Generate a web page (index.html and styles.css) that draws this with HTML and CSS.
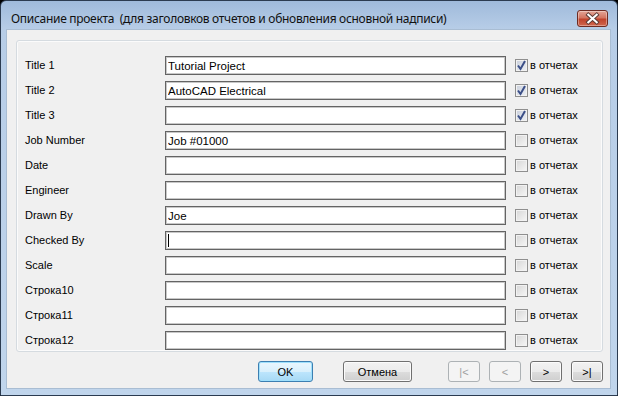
FILE: index.html
```html
<!DOCTYPE html>
<html lang="ru">
<head>
  <meta charset="UTF-8">
  <title>Описание проекта</title>
  <link rel="stylesheet" href="styles.css">
</head>
<body>

  <div class="window">
    <div class="titlebar">
      <span class="title">Описание проекта  (для заголовков отчетов и обновления основной надписи)</span>
      <button class="close" title="Закрыть">
        <svg width="31" height="17" viewBox="0 0 31 17">
          <path d="M11 4.5 L20 12.5 M20 4.5 L11 12.5" stroke="#5b3a35" stroke-width="4.2" stroke-linecap="square"/>
          <path d="M11 4.5 L20 12.5 M20 4.5 L11 12.5" stroke="#fff" stroke-width="2.2" stroke-linecap="square"/>
        </svg>
      </button>
    </div>

    <div class="client">
      <div class="panel">
        <div class="row">
          <span class="name">Title 1</span>
          <input class="field" type="text" value="Tutorial Project">
          <span class="report"><span class="box checked"><svg width="11" height="11" viewBox="0 0 11 11"><path d="M2 5.5 L4.5 9 L9 1" fill="none" stroke="#3b4f88" stroke-width="2"/></svg></span>в отчетах</span>
        </div>
        <div class="row">
          <span class="name">Title 2</span>
          <input class="field" type="text" value="AutoCAD Electrical">
          <span class="report"><span class="box checked"><svg width="11" height="11" viewBox="0 0 11 11"><path d="M2 5.5 L4.5 9 L9 1" fill="none" stroke="#3b4f88" stroke-width="2"/></svg></span>в отчетах</span>
        </div>
        <div class="row">
          <span class="name">Title 3</span>
          <input class="field" type="text" value="">
          <span class="report"><span class="box checked"><svg width="11" height="11" viewBox="0 0 11 11"><path d="M2 5.5 L4.5 9 L9 1" fill="none" stroke="#3b4f88" stroke-width="2"/></svg></span>в отчетах</span>
        </div>
        <div class="row">
          <span class="name">Job Number</span>
          <input class="field" type="text" value="Job #01000">
          <span class="report"><span class="box"></span>в отчетах</span>
        </div>
        <div class="row">
          <span class="name">Date</span>
          <input class="field" type="text" value="">
          <span class="report"><span class="box"></span>в отчетах</span>
        </div>
        <div class="row">
          <span class="name">Engineer</span>
          <input class="field" type="text" value="">
          <span class="report"><span class="box"></span>в отчетах</span>
        </div>
        <div class="row">
          <span class="name">Drawn By</span>
          <input class="field" type="text" value="Joe">
          <span class="report"><span class="box"></span>в отчетах</span>
        </div>
        <div class="row">
          <span class="name">Checked By</span>
          <span class="field-wrap focused"><input class="field" type="text" value=""></span>
          <span class="report"><span class="box"></span>в отчетах</span>
        </div>
        <div class="row">
          <span class="name">Scale</span>
          <input class="field" type="text" value="">
          <span class="report"><span class="box"></span>в отчетах</span>
        </div>
        <div class="row">
          <span class="name">Строка10</span>
          <input class="field" type="text" value="">
          <span class="report"><span class="box"></span>в отчетах</span>
        </div>
        <div class="row">
          <span class="name">Строка11</span>
          <input class="field" type="text" value="">
          <span class="report"><span class="box"></span>в отчетах</span>
        </div>
        <div class="row">
          <span class="name">Строка12</span>
          <input class="field" type="text" value="">
          <span class="report"><span class="box"></span>в отчетах</span>
        </div>
      </div>

      <div class="buttons">
        <button class="btn default ok">OK</button>
        <button class="btn cancel">Отмена</button>
        <div class="nav">
          <button class="btn small" disabled>|&lt;</button>
          <button class="btn small" disabled>&lt;</button>
          <button class="btn small">&gt;</button>
          <button class="btn small">&gt;|</button>
        </div>
      </div>
    </div>
  </div>

</body>
</html>
```

FILE: styles.css
```css
body {
  margin: 0;
  background: #000;
  font-family: 'Liberation Sans', Arial, sans-serif;
  font-size: 11px;
  color: #000;
}

.window {
  width: 618px;
  height: 396px;
  box-sizing: border-box;
  border: 1px solid #2b3b50;
  border-radius: 6px 6px 0 0;
  background: linear-gradient(#9fbadb 0, #b7cde7 28px, #c0d5ec 100%);
  display: flex;
  flex-direction: column;
}

.titlebar {
  height: 29px;
  box-sizing: border-box;
  padding: 6px 9px 0 10px;
  display: flex;
  align-items: center;
  justify-content: space-between;
}

.title {
  font-family: 'Noto Sans', 'Open Sans', sans-serif;
  font-size: 12px;
  color: #111;
  white-space: pre;
  letter-spacing: -0.3px;
}

.close {
  width: 31px;
  height: 17px;
  margin-top: -1px;
  padding: 0;
  border: 1px solid #6e2b22;
  border-radius: 3px;
  background: linear-gradient(#e3a597 0, #d47561 45%, #c0432c 55%, #d0664e 100%);
  box-shadow: inset 0 0 0 1px rgba(255, 255, 255, 0.35);
  display: flex;
  align-items: center;
  justify-content: center;
}

.close svg {
  display: block;
}

.client {
  flex: 1;
  margin: 0 7px 7px 6px;
  background: #f0f0f0;
  box-shadow: 0 0 0 1px #a9bdd3;
  display: flex;
  flex-direction: column;
}

.panel {
  margin: 10px 7px 0 9px;
  padding: 15px 0 1px 8px;
  border: 1px solid #d5dbe0;
  border-radius: 3px;
  box-shadow: inset 0 0 0 1px #fbfbfb;
  display: flex;
  flex-direction: column;
  gap: 6px;
}

.row {
  display: flex;
  align-items: center;
  height: 19px;
}

.name {
  width: 140px;
  margin-top: -2px;
}

.field {
  width: 341px;
  height: 19px;
  box-sizing: border-box;
  margin: 0;
  padding: 0 2px;
  border: 1px solid #646464;
  box-shadow: inset 0 0 0 1px #c8c8c8;
  border-radius: 0;
  background: #fff;
  font-family: 'Liberation Sans', Arial, sans-serif;
  font-size: 11.5px;
  color: #000;
  outline: none;
}

.field-wrap {
  position: relative;
  display: block;
  height: 19px;
}

.focused::after {
  content: "";
  position: absolute;
  left: 3px;
  top: 3px;
  width: 1px;
  height: 13px;
  background: #000;
}

.report {
  margin-left: 9px;
  display: flex;
  align-items: center;
  gap: 2px;
  margin-top: -1px;
}

.box {
  width: 13px;
  height: 13px;
  box-sizing: border-box;
  border: 1px solid #8f8f8f;
  background: linear-gradient(135deg, #d6d6d6, #f7f7f7);
  box-shadow: inset 0 0 0 1px #f2f2f2;
  display: flex;
  align-items: center;
  justify-content: center;
}

.box.checked {
  background: linear-gradient(135deg, #c9cfdb, #eef1f6);
}

.box svg {
  display: block;
}

.buttons {
  margin: 9px 7px 0 0;
  display: flex;
  justify-content: flex-end;
  align-items: center;
}

.btn {
  height: 21px;
  margin: 0;
  padding: 0;
  border: 1px solid #707070;
  border-radius: 3px;
  background: linear-gradient(#f2f2f2 0, #ebebeb 50%, #dddddd 50%, #cfcfcf 100%);
  box-shadow: inset 0 0 0 1px #fbfbfb;
  font-family: 'Liberation Sans', Arial, sans-serif;
  font-size: 11px;
  color: #000;
}

.btn.default {
  border-color: #3c7fb1;
  background: linear-gradient(#eaf6fd 0, #d9f0fc 50%, #bee6fd 50%, #a7d9f5 100%);
  box-shadow: inset 0 0 0 1px #9fe0fc;
}

.ok {
  width: 55px;
}

.cancel {
  width: 69px;
  margin-left: 30px;
}

.nav {
  margin-left: 36px;
  display: flex;
  gap: 9px;
}

.btn.small {
  width: 32px;
}

.btn:disabled {
  border-color: #adb2b5;
  background: #f4f4f4;
  box-shadow: none;
  color: #a0a0a0;
}
```
